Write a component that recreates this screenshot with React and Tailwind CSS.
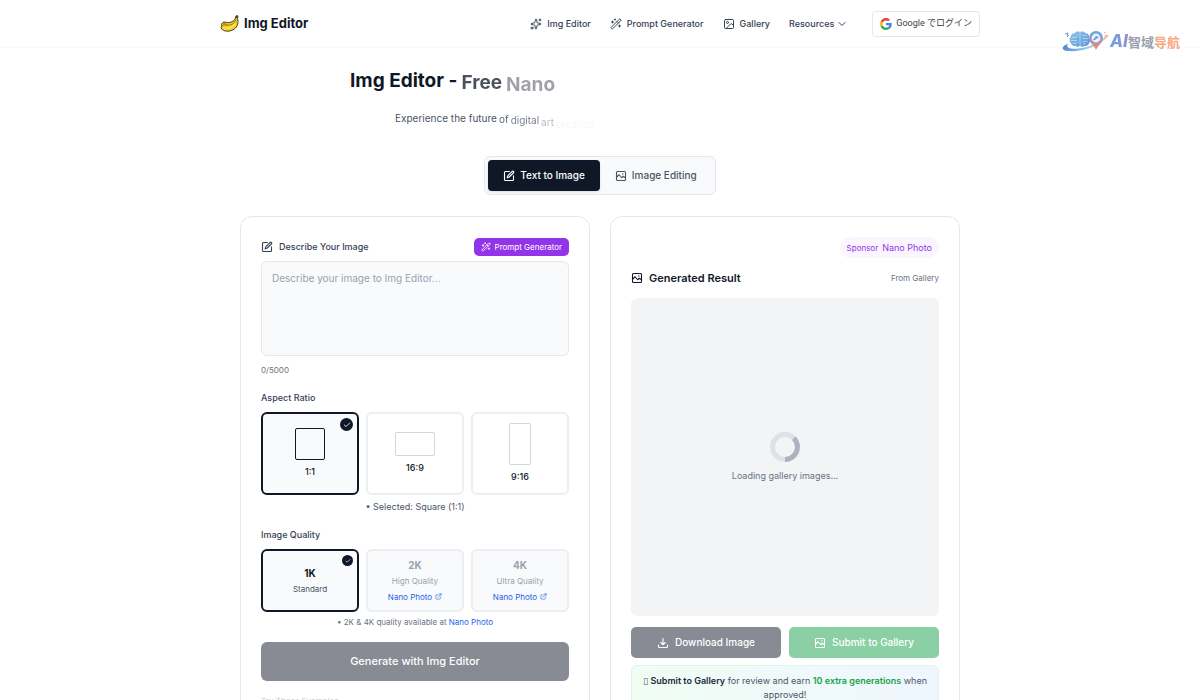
import React from "react";
import { Sparkles, Wand2, Image as ImageIcon, ChevronDown, Check, ExternalLink } from "lucide-react";

const EditIcon = ({ className }) => (
  <svg className={className} viewBox="0 0 24 24" fill="none" stroke="currentColor" strokeWidth="2.2" strokeLinecap="round" strokeLinejoin="round" aria-hidden="true">
    <path d="M12.500 3H5a2 2 0 0 0-2 2v14a2 2 0 0 0 2 2h14a2 2 0 0 0 2-2v-7.500" />
    <path d="M18.300 2.800a1.900 1.900 0 0 1 2.700 2.700L12.500 14l-4.200 1.600L9.800 11.300z" />
  </svg>
);

const PictureIcon = ({ className }) => (
  <svg className={className} viewBox="0 0 24 24" fill="none" stroke="currentColor" strokeWidth="2.2" strokeLinecap="round" strokeLinejoin="round" aria-hidden="true">
    <rect x="3" y="3" width="18" height="18" rx="2" />
    <path d="M3 14.500l5-5 5.500 6 3-3 4.500 3" />
    <circle cx="15.500" cy="8" r="0.500" />
  </svg>
);

const DownloadIcon = ({ className }) => (
  <svg className={className} viewBox="0 0 24 24" fill="none" stroke="currentColor" strokeWidth="2.2" strokeLinecap="round" strokeLinejoin="round" aria-hidden="true">
    <path d="M12 3v12M7.500 11l4.500 4.500 4.500-4.500M3 16v3a2 2 0 0 0 2 2h14a2 2 0 0 0 2-2v-3" />
  </svg>
);

const Banana = () => (
  <svg className="h-5 w-5" viewBox="0 0 20 20" aria-hidden="true">
    <path d="M15.800 2.200l1.600-.6.600 1.200-.6 1.400c1.400 4.200.3 8.200-3.200 10.900-3.800 2.800-9.200 2.500-11.700.7C1 14.700.9 13.100 1.700 11.800c-.5-1.600.3-3.200 2-3.600 2-.4 3.200.6 4.600.5 4-.4 6.600-2.300 7.300-4.800z" fill="#f7d21e" stroke="#3f3a20" strokeWidth="1" strokeLinejoin="round" />
    <path d="M2 12c1.400-1.500 3-1 4.500-.8 4.300.3 8.200-1.800 9.700-5.600M3.200 9.800c1.500-.5 2.600.6 4 .6" fill="none" stroke="#7a611a" strokeWidth=".8" />
    <path d="M3.500 13.700c4 1.300 9 .2 11.500-3.700" fill="none" stroke="#fdec6a" strokeWidth="1.200" />
    <path d="M15.600 2.300l1.800-.7.600 1.200-.6 1.400-1.600-.2z" fill="#4b4a2a" />
  </svg>
);

const GoogleIcon = () => (
  <svg className="h-3 w-3" viewBox="0 0 48 48" aria-hidden="true">
    <path fill="#EA4335" d="M24 9.500c3.540 0 6.710 1.220 9.210 3.600l6.850-6.850C35.900 2.380 30.470 0 24 0 14.620 0 6.510 5.380 2.560 13.220l7.980 6.190C12.430 13.720 17.740 9.500 24 9.500z" />
    <path fill="#4285F4" d="M46.980 24.550c0-1.570-.15-3.090-.38-4.550H24v9.020h12.940c-.58 2.960-2.260 5.480-4.780 7.180l7.730 6c4.510-4.180 7.090-10.360 7.090-17.650z" />
    <path fill="#FBBC05" d="M10.530 28.590c-.48-1.450-.76-2.990-.76-4.590s.27-3.140.76-4.590l-7.980-6.190C.92 16.460 0 20.120 0 24c0 3.880.92 7.540 2.560 10.780l7.970-6.190z" />
    <path fill="#34A853" d="M24 48c6.480 0 11.930-2.130 15.890-5.810l-7.730-6c-2.150 1.450-4.920 2.300-8.160 2.300-6.260 0-11.570-4.220-13.470-9.910l-7.980 6.190C6.510 42.620 14.620 48 24 48z" />
  </svg>
);

const WatermarkArt = () => (
  <svg className="h-6 w-12" viewBox="0 0 48 24" fill="none" aria-hidden="true">
    <defs>
      <linearGradient id="orbit" x1="0" x2="1"><stop stopColor="#5588c9" /><stop offset=".55" stopColor="#9fcdf0" /><stop offset="1" stopColor="#fab993" /></linearGradient>
      <linearGradient id="pin" x1="0" y1="0" x2="0" y2="1"><stop stopColor="#5fa9e8" /><stop offset=".5" stopColor="#a896c8" /><stop offset="1" stopColor="#f58a5c" /></linearGradient>
      <linearGradient id="brain" x1="0" y1="0" x2="1" y2="1"><stop stopColor="#8fc6ee" /><stop offset="1" stopColor="#5b93d4" /></linearGradient>
    </defs>
    <path d="M6 13.500C-1 16.500-1 20.500 6 21c11 .8 23-2 32-8 6-4 9.500-7 8-8-1-.6-3 0-5 .8 3-.4 2.500 1-1 3.700-8 6-19 9.500-28 9.200-6-.2-8-1.700-6-5.200z" fill="url(#orbit)" />
    <path d="M18 2c-2-1-4.500-.4-5.500 1.200C10 3 8.500 5 9 7c-2 1.500-2 4.500 0 6 0 2 2.500 3.500 4.500 2.800 1.200 1.200 3 1.200 4.500.2 1.500 1 3.300 1 4.500-.2 2 .7 4.500-.8 4.500-2.800 2-1.500 2-4.500 0-6 .5-2-1-4-3.500-3.800C22.500 1.600 20 1 18 2z" fill="url(#brain)" />
    <path d="M18 2v14M10 7.500h4l1.500-2M9 10.500h6M11 13.500h3l1.500-1.500M20.500 5.500h4M20.500 8.500h6M20.500 11.500h5M20.500 13.800h3" stroke="#d9ecfa" strokeWidth=".6" />
    <path d="M34 1a7 7 0 0 1 7 7c0 5-5 7-7 12-2-5-7-7-7-12a7 7 0 0 1 7-7z" fill="url(#pin)" />
    <circle cx="34" cy="8" r="4.400" fill="#e9f3fb" />
    <path d="M31 10l3-4 3 1-4 3z" fill="#659ed4" />
    <path d="M3 4l3-1-1 3M5 7l2-2" stroke="#709ed2" strokeWidth="1" />
    <path d="M42 3l2-1M45 7l1-1" stroke="#f6b596" strokeWidth="1" />
  </svg>
);

const PANEL = "flex-1 rounded-xl border border-gray-200 bg-white p-5";

function NavLink({ Icon, children }) {
  return (
    <a href="#" className="flex items-center gap-[5px]">
      {Icon && <Icon className="h-3 w-3" strokeWidth={2} />}
      {children}
    </a>
  );
}

function Header() {
  return (
    <header className="border-b border-gray-50">
      <div className="mx-auto flex h-[47px] max-w-[760px] items-center justify-between">
        <a href="#" className="flex items-center gap-1 text-[13px] font-bold text-gray-900">
          <Banana />
          Img Editor
        </a>
        <div className="flex items-center gap-6">
          <nav className="flex items-center gap-[19px] text-[9px] font-medium text-gray-700">
            <NavLink Icon={Sparkles}>Img Editor</NavLink>
            <NavLink Icon={Wand2}>Prompt Generator</NavLink>
            <NavLink Icon={ImageIcon}>Gallery</NavLink>
            <button type="button" className="flex items-center gap-0.5">
              Resources
              <ChevronDown className="h-3 w-3" strokeWidth={2} />
            </button>
          </nav>
          <button type="button" className="flex h-[26px] items-center gap-1 rounded-[3px] border border-gray-200 px-[7px] font-['Roboto','Noto_Sans_CJK_JP',sans-serif] text-[9px] text-[#3c4043]">
            <GoogleIcon />
            Google でログイン
          </button>
        </div>
      </div>
    </header>
  );
}

function RatioCard({ label, shape, checked }) {
  return (
    <label className={checked ? "relative flex h-[83px] flex-1 flex-col items-center justify-center gap-1.5 rounded-md border-2 border-gray-900 bg-gray-50 pb-0.5" : "relative flex h-[83px] flex-1 flex-col items-center justify-center gap-1.5 rounded-md border-2 border-[#eceef1] bg-white pb-0.5"}>
      <input type="radio" name="ratio" defaultChecked={checked} className="sr-only" />
      <span className={shape} />
      <span className="text-[9px] leading-3 font-medium text-gray-900">{label}</span>
      {checked && <Tick big />}
    </label>
  );
}

function Tick({ big }) {
  return (
    <span className={big ? "absolute top-1 right-1 flex h-[13px] w-[13px] items-center justify-center rounded-full bg-gray-900 text-white" : "absolute top-1 right-1 flex h-[11px] w-[11px] items-center justify-center rounded-full bg-gray-900 text-white"}>
      <Check className={big ? "h-2 w-2" : "h-1.5 w-1.5"} strokeWidth={2.5} />
    </span>
  );
}

function LockedQuality({ name, detail }) {
  return (
    <div className="flex h-[63px] flex-1 flex-col items-center justify-center gap-1 rounded-md border-2 border-[#eceef1] bg-gray-50 text-gray-400">
      <span className="text-[10px] leading-3 font-bold">{name}</span>
      <span className="text-[8px] leading-3">{detail}</span>
      <a href="#" className="flex items-center gap-[3px] text-[8px] leading-3 text-[#2563eb]">
        Nano Photo
        <ExternalLink className="h-[7px] w-[7px]" />
      </a>
    </div>
  );
}

function EditorPanel() {
  return (
    <section className={PANEL}>
      <div className="flex h-5 items-center justify-between">
        <label htmlFor="prompt" className="flex items-center gap-1.5 text-[9px] font-medium text-gray-700">
          <EditIcon className="h-3 w-3" />
          Describe Your Image
        </label>
        <button type="button" className="flex h-[18px] items-center gap-1 rounded-[5px] bg-[#9333ea] px-[7px] text-[8px] text-white">
          <Wand2 className="h-[10px] w-[10px]" />
          Prompt Generator
        </button>
      </div>
      <textarea id="prompt" placeholder="Describe your image to Img Editor..." className="mt-1 block h-[95px] w-full resize-none rounded-md border border-gray-200 bg-gray-50 px-2.5 py-2 text-[10px] leading-4 placeholder:text-gray-400" />
      <p className="mt-2 text-[8px] leading-3 text-gray-500">0/5000</p>

      <h2 className="mt-4 text-[9px] leading-3 font-medium text-gray-700">Aspect Ratio</h2>
      <div className="mt-2 flex gap-[7px]">
        <RatioCard label="1:1" checked shape="h-8 w-[30px] rounded-[2px] border border-gray-900" />
        <RatioCard label="16:9" shape="h-6 w-10 rounded-[2px] border border-gray-300" />
        <RatioCard label="9:16" shape="h-[42px] w-[22px] rounded-[2px] border border-gray-300" />
      </div>
      <p className="mt-1.5 text-center text-[9px] leading-3 text-gray-600">• Selected: Square (1:1)</p>

      <h2 className="mt-4 text-[9px] leading-3 font-medium text-gray-700">Image Quality</h2>
      <div className="mt-2 flex gap-[7px]">
        <label className="relative flex h-[63px] flex-1 flex-col items-center justify-center gap-1 rounded-md border-2 border-gray-900 bg-gray-50">
          <input type="radio" name="quality" defaultChecked className="sr-only" />
          <span className="text-[10px] leading-3 font-bold text-gray-900">1K</span>
          <span className="text-[8px] leading-3 text-gray-600">Standard</span>
          <Tick />
        </label>
        <LockedQuality name="2K" detail="High Quality" />
        <LockedQuality name="4K" detail="Ultra Quality" />
      </div>
      <p className="mt-1 text-center text-[8px] leading-3 text-gray-500">
        • 2K &amp; 4K quality available at <a href="#" className="text-[#2563eb]">Nano Photo</a>
      </p>

      <button type="button" disabled className="mt-3.5 h-[39px] w-full rounded-md bg-[#888b93] text-[11px] font-medium text-white">
        Generate with Img Editor
      </button>
      <h2 className="mt-3.5 text-[8px] leading-3 font-medium text-gray-300">Try These Examples</h2>
    </section>
  );
}

function ResultPanel() {
  return (
    <section className={PANEL}>
      <div className="flex justify-end">
        <a href="#" className="flex h-[21px] items-center gap-1 rounded-full bg-[#faf5ff] px-[7px] text-[8px] text-[#9333ea]">
          Sponsor <span className="text-[9px]">Nano Photo</span>
        </a>
      </div>
      <div className="mt-3 flex h-4 items-center justify-between">
        <h2 className="flex items-center gap-1.5 text-[11px] font-semibold text-gray-900">
          <PictureIcon className="h-3 w-3" />
          Generated Result
        </h2>
        <span className="text-[8px] text-gray-500">From Gallery</span>
      </div>
      <div className="mt-3 flex h-[318px] flex-col items-center justify-center gap-2 rounded-md bg-gray-100">
        <svg className="h-[30px] w-[30px]" viewBox="0 0 30 30" fill="none" aria-hidden="true">
          <circle cx="15" cy="15" r="12.500" stroke="#dfe1e6" strokeWidth="5" />
          <path d="M23.800 6.200A12.500 12.500 0 0 1 15 27.500" stroke="#adb2bf" strokeWidth="5" />
        </svg>
        <p className="text-[9px] leading-3 text-gray-500">Loading gallery images...</p>
      </div>
      <div className="mt-[11px] flex gap-2 text-[10px] font-medium text-white">
        <button type="button" disabled className="flex h-[31px] flex-1 items-center justify-center gap-1.5 rounded-[5px] bg-[#888b93]">
          <DownloadIcon className="h-3 w-3" />
          Download Image
        </button>
        <button type="button" disabled className="flex h-[31px] flex-1 items-center justify-center gap-1.5 rounded-[5px] bg-[#8ad0a4]">
          <PictureIcon className="h-3 w-3" />
          Submit to Gallery
        </button>
      </div>
      <p className="mt-[7px] rounded-md border border-[#dcf5e6] bg-linear-to-r from-green-50 to-blue-50 px-2 py-2 text-center text-[9px] leading-[13px] text-gray-600">
        <span className="font-['DejaVu_Sans']">▯</span> <strong className="font-semibold text-gray-800">Submit to Gallery</strong> for review and earn{" "}
        <strong className="font-semibold text-[#16a34a]">10 extra generations</strong> when approved!
      </p>
    </section>
  );
}

export default function App() {
  return (
    <div className="min-h-screen bg-white font-['Inter',sans-serif]">
      <Header />
      <div className="absolute top-[29px] right-5 flex items-center" aria-label="AI智域导航">
        <WatermarkArt />
        <span className="font-['Noto_Sans_CJK_SC',sans-serif] text-[13px] leading-6 font-bold text-gray-400">
          <span className="bg-linear-to-r from-[#6fa3e4] to-[#8f90cf] bg-clip-text font-['Inter'] text-[17px] font-extrabold text-transparent italic">AI</span>智域<span className="text-[#f8a67f]">导航</span>
        </span>
      </div>
      <main className="mx-auto max-w-[720px] pt-[19px]">
        <h1 className="ml-[110px] flex items-start gap-1 text-[19px] leading-7 font-bold text-gray-900">
          <span>Img Editor -</span>
          <span className="pt-0.5 opacity-75">Free</span>
          <span className="pt-1 opacity-40">Nano</span>
        </h1>
        <p className="mt-[11px] ml-[155px] flex items-start gap-0.5 text-[10px] leading-4 text-gray-600">
          <span>Experience the future</span>
          <span className="pt-px opacity-90">of</span>
          <span className="pt-0.5 opacity-75">digital</span>
          <span className="pt-1 opacity-40">art</span>
          <span className="pt-1.5 opacity-5">creation</span>
        </p>
        <div className="mt-6 flex justify-center">
          <div className="flex rounded-md border border-gray-200 bg-gray-50 p-[3px] text-[10px] font-medium">
            <button type="button" className="flex h-[31px] items-center gap-[5px] rounded-[4px] bg-gray-900 px-[15px] text-white shadow-sm">
              <EditIcon className="h-3 w-3" />
              Text to Image
            </button>
            <button type="button" className="flex h-[31px] items-center gap-[5px] px-[15px] text-gray-600">
              <PictureIcon className="h-3 w-3" />
              Image Editing
            </button>
          </div>
        </div>
        <div className="mt-[21px] flex gap-5">
          <EditorPanel />
          <ResultPanel />
        </div>
      </main>
    </div>
  );
}
